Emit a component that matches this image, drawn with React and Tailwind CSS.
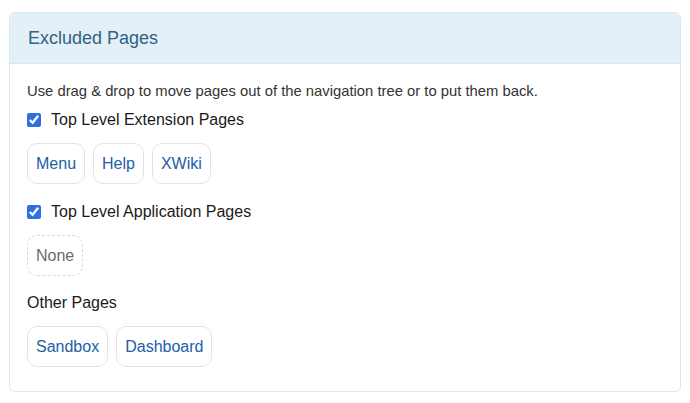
import { useState } from 'react'

const font = { fontFamily: '"Liberation Sans", Arial, sans-serif' }

function PageChip({ label }) {
  return (
    <a
      href="#"
      className="block rounded-[10px] border border-[#e3e3e3] bg-white px-[8px] py-[9px] text-[16px] leading-[21px] text-[#2160a8] no-underline"
    >
      {label}
    </a>
  )
}

function EmptyChip() {
  return (
    <div className="rounded-[10px] border border-dashed border-[#d9d9d9] px-[8px] py-[9px] text-[16px] leading-[21px] text-[#6b6b6b]">
      None
    </div>
  )
}

function Group({ label, checked, onToggle, pages }) {
  return (
    <div>
      <label className="flex h-[22px] items-center gap-[10px] text-[16px] leading-[22px] text-[#1a1a1a]">
        {onToggle && (
          <input
            type="checkbox"
            checked={checked}
            onChange={onToggle}
            className="m-0 h-[14px] w-[14px] accent-[#2f6fe4]"
          />
        )}
        {label}
      </label>
      <div className="mt-[12px] flex gap-[8px]">
        {pages.length ? pages.map((p) => <PageChip key={p} label={p} />) : <EmptyChip />}
      </div>
    </div>
  )
}

export default function App() {
  const [ext, setExt] = useState(true)
  const [app, setApp] = useState(true)

  return (
    <div className="min-h-[403px] bg-white pl-[9px] pr-[9px] pt-[12px]" style={font}>
      <div className="rounded-[6px] border border-[#d3e9f3] bg-white">
        {/* Heading */}
        <div className="flex h-[51px] items-center rounded-t-[6px] border-b border-[#d3e9f3] bg-[#e3f0f8] px-[18px]">
          <h3 className="text-[18px] font-normal text-[#2f6283]">Excluded Pages</h3>
        </div>

        {/* Body */}
        <div className="px-[17px] pb-[24px] pt-[17px]">
          <p className="text-[14.8px] leading-[20px] text-[#333]">
            Use drag &amp; drop to move pages out of the navigation tree or to put them back.
          </p>
          <div className="mt-[8px]">
            <Group
              label="Top Level Extension Pages"
              checked={ext}
              onToggle={() => setExt(!ext)}
              pages={['Menu', 'Help', 'XWiki']}
            />
          </div>
          <div className="mt-[17px]">
            <Group
              label="Top Level Application Pages"
              checked={app}
              onToggle={() => setApp(!app)}
              pages={[]}
            />
          </div>
          <div className="mt-[16px]">
            <Group label="Other Pages" pages={['Sandbox', 'Dashboard']} />
          </div>
        </div>
      </div>
    </div>
  )
}
